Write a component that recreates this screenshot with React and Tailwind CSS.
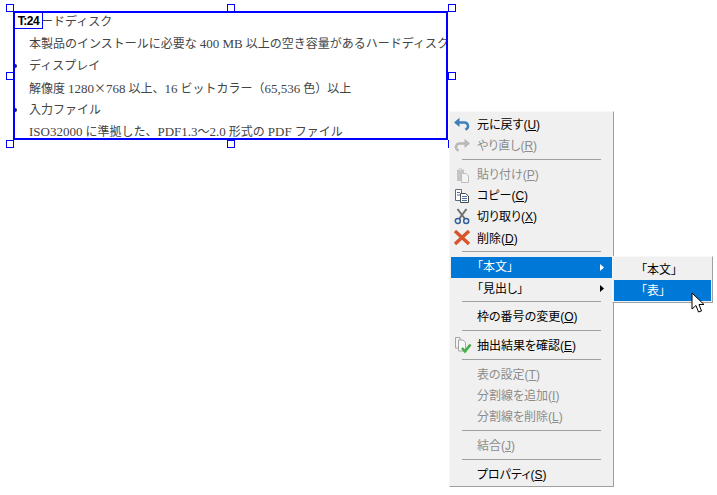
const DOC_LINES = [
  { text: 'ードディスク', bullet: false, inset: 'pl-[12px]' },
  { text: '本製品のインストールに必要な 400 MB 以上の空き容量があるハードディスク', bullet: false },
  { text: 'ディスプレイ', bullet: true },
  { text: '解像度 1280×768 以上、16 ビットカラー（65,536 色）以上', bullet: false },
  { text: '入力ファイル', bullet: true },
  { text: 'ISO32000 に準拠した、PDF1.3～2.0 形式の PDF ファイル', bullet: false },
];

function Undo() {
  return (
    <svg width="18" height="18" viewBox="0 0 18 18" fill="none">
      <path d="M5 6.5 H11 a3.6 3.6 0 0 1 2.5 6.5 l-1 .8" stroke="#3f7fb8" strokeWidth="2.4" />
      <path d="M1 6.5 L6.5 1.8 V11 Z" fill="#3f7fb8" />
    </svg>
  );
}

function Redo() {
  return (
    <svg width="18" height="18" viewBox="0 0 18 18" fill="none">
      <path d="M13 6.5 H7 a3.6 3.6 0 0 0 -2.5 6.5 l1 .8" stroke="#b8b8b8" strokeWidth="2.4" />
      <path d="M17 6.5 L11.5 1.8 V11 Z" fill="#b8b8b8" />
    </svg>
  );
}

function PasteIcon() {
  return (
    <svg width="18" height="18" viewBox="0 0 18 18" fill="none">
      <path d="M4 3.5 H11 V7 H8 V15 H4 Z" fill="#c4c4c4" />
      <rect x="6" y="2" width="3" height="2.5" fill="#d8d8d8" />
      <path d="M8.5 7.5 H13 L15.5 10 V16.5 H8.5 Z" fill="#f4f4f4" stroke="#bdbdbd" />
    </svg>
  );
}

function CopyIcon() {
  return (
    <svg width="18" height="18" viewBox="0 0 18 18" fill="none">
      <path d="M2.5 2.5 H8.5 V13.5 H2.5 Z" fill="#fff" stroke="#5a6a7c" />
      <path d="M7.5 6.5 H12.5 L15.5 9 V15.5 H7.5 Z" fill="#fff" stroke="#4a4a4a" />
      <path d="M4 5.5 H7 M4 8 H7 M9 9.5 H14 M9 11.5 H14 M9 13.5 H14" stroke="#4a6fa0" />
    </svg>
  );
}

function CutIcon() {
  return (
    <svg width="18" height="18" viewBox="0 0 18 18" fill="none">
      <path d="M4.5 1 L12 11 M13.5 1 L6 11" stroke="#6f6f6f" strokeWidth="2" />
      <circle cx="4.8" cy="13" r="2.5" stroke="#35609a" strokeWidth="1.5" />
      <circle cx="13.2" cy="13" r="2.5" stroke="#35609a" strokeWidth="1.5" />
    </svg>
  );
}

function DeleteIcon() {
  return (
    <svg width="18" height="18" viewBox="0 0 18 18" fill="none">
      <path d="M2 1 L16 14 M16 1 L2 14" stroke="#d9542b" strokeWidth="3.4" />
    </svg>
  );
}

function CheckResultIcon() {
  return (
    <svg width="20" height="20" viewBox="0 0 20 20" fill="none">
      <path d="M2.5 1.5 H7 V12 H2.5 Z" fill="#f4f4f4" stroke="#a5a5a5" />
      <path d="M5.5 4 H10 L12.5 6.5 V15 H5.5 Z" fill="#f8f8f8" stroke="#a5a5a5" />
      <path d="M9 12 L12 15.5 L17.5 8.5" stroke="#45b045" strokeWidth="2.6" />
    </svg>
  );
}

function Sep() {
  return (
    <div className="h-[7.4px] flex items-center pb-[2px] px-[11px]">
      <div className="h-px w-full bg-[#a0a0a0]" />
    </div>
  );
}

function Item({ label, icon, disabled, active, arrow }) {
  const color = active ? 'text-white bg-[#0078d7]' : disabled ? 'text-[#8c8c8c]' : 'text-black';
  return (
    <div className={`h-[21.3px] flex items-center pr-[8px] text-[12px] leading-none [font-feature-settings:'palt'] ${color}`}>
      <span className="w-[26px] shrink-0 pl-[2px] flex items-center">{icon}</span>
      <span>{label}</span>
      {arrow && (
        <svg className="ml-auto" width="4" height="7" viewBox="0 0 4 7">
          <path d="M0 0 L4 3.5 L0 7 Z" fill={active ? '#fff' : '#000'} />
        </svg>
      )}
    </div>
  );
}

function Key({ children }) {
  return <span className="underline">{children}</span>;
}

function Handle() {
  return <div className="w-[8px] h-[8px] bg-white border border-[#0000ff]" />;
}

// latin runs of the document text come out a bit larger than the japanese
function DocText({ text }) {
  return text.split(/([A-Za-z0-9.,]+(?: [A-Z]+)?|×)/).map((part, i) => {
    if (part === '×') return <span key={i} className="font-['Noto_Sans_CJK_JP']">×</span>;
    if (/^[A-Za-z0-9]/.test(part)) return <span key={i} className="text-[13px]">{part}</span>;
    return <span key={i}>{part}</span>;
  });
}

export default function App() {
  return (
    <div className="relative w-[717px] h-[495px] bg-white overflow-hidden font-['Liberation_Sans','Noto_Sans_CJK_JP',sans-serif]">
      {/* selected frame */}
      <div className="absolute left-[13px] top-[11px] w-[435px] h-[129px] border-2 border-[#0000ff] overflow-hidden">
        <div className="flex flex-col gap-[10px] pt-[3px] font-['Liberation_Serif','Noto_Sans_CJK_JP',serif] text-[12px] text-[#444]">
          {DOC_LINES.map((line, i) => (
            <div key={i} className="h-[12px] leading-[12px] flex items-center whitespace-pre">
              <span className="w-[14px] shrink-0 flex items-center">
                {line.bullet && <span className="w-[4px] h-[4px] -ml-[2px] rounded-full bg-[#222]" />}
              </span>
              <span className={line.inset}><DocText text={line.text} /></span>
            </div>
          ))}
        </div>
        <div className="absolute left-0 top-0 w-[28px] h-[16px] bg-white border-r border-b border-[#0000ff] flex items-center justify-center text-[12px] font-bold tracking-[-0.5px] text-black leading-none">
          T:24
        </div>
      </div>

      {/* resize handles */}
      <div className="absolute left-[6px] top-[4px] w-[450px] h-[144px] flex flex-col justify-between">
        <div className="flex justify-between"><Handle /><Handle /><Handle /></div>
        <div className="flex justify-between"><Handle /><Handle /></div>
        <div className="flex justify-between"><Handle /><Handle /><Handle /></div>
      </div>

      {/* context menu */}
      <div className="absolute left-[449px] top-[111px] w-[165px] h-[376px] bg-[#f0f0f0] border border-[#f8f8f8] border-r-[#a0a0a0] border-b-[#a0a0a0] pt-[2px] px-px">
        <Item icon={<Undo />} label={<>元に戻す(<Key>U</Key>)</>} />
        <Item icon={<Redo />} disabled label={<>やり直し(<Key>R</Key>)</>} />
        <Sep />
        <Item icon={<PasteIcon />} disabled label={<>貼り付け(<Key>P</Key>)</>} />
        <Item icon={<CopyIcon />} label={<>コピー(<Key>C</Key>)</>} />
        <Item icon={<CutIcon />} label={<>切り取り(<Key>X</Key>)</>} />
        <Item icon={<DeleteIcon />} label={<>削除(<Key>D</Key>)</>} />
        <Sep />
        <Item active arrow label="「本文」" />
        <Item arrow label="「見出し」" />
        <Sep />
        <Item label={<>枠の番号の変更(<Key>O</Key>)</>} />
        <Sep />
        <Item icon={<CheckResultIcon />} label={<>抽出結果を確認(<Key>E</Key>)</>} />
        <Sep />
        <Item disabled label={<>表の設定(<Key>T</Key>)</>} />
        <Item disabled label={<>分割線を追加(<Key>I</Key>)</>} />
        <Item disabled label={<>分割線を削除(<Key>L</Key>)</>} />
        <Sep />
        <Item disabled label={<>結合(<Key>J</Key>)</>} />
        <Sep />
        <Item label={<>プロパティ(<Key>S</Key>)</>} />
      </div>

      {/* submenu */}
      <div className="absolute left-[612px] top-[256px] w-[101px] h-[47px] bg-[#f0f0f0] border border-[#f8f8f8] border-r-[#a0a0a0] border-b-[#a0a0a0] pt-[2px] px-px text-[12px] [font-feature-settings:'palt']">
        <div className="h-[21px] flex items-center pl-[27px] text-black">「本文」</div>
        <div className="h-[21px] flex items-center pl-[27px] bg-[#0078d7] text-white">「表」</div>
      </div>

      {/* cursor */}
      <svg className="absolute left-[691px] top-[292px]" width="15" height="22" viewBox="0 0 15 22">
        <path d="M1 1 V17 L5 13.5 L7.5 20 L10.5 19 L8 12.5 L13 12.5 Z" fill="#fff" stroke="#000" />
      </svg>
    </div>
  );
}
